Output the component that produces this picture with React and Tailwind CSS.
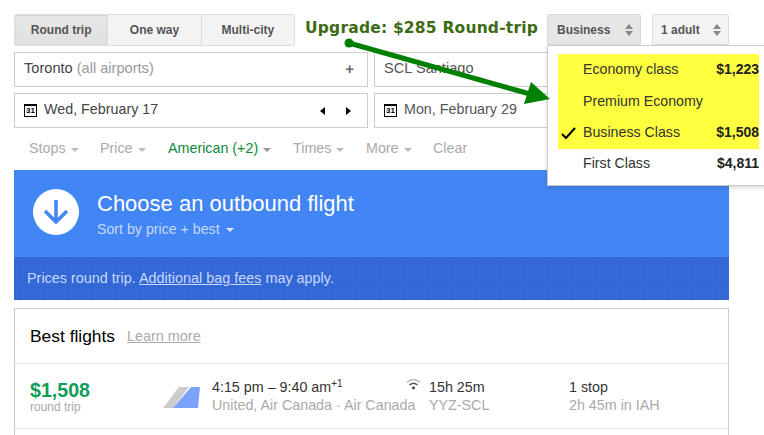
import React from "react";

const Caret = ({ c = "border-t-[#bbb]" }) => (
  <span className={`inline-block w-0 h-0 border-x-[4px] border-x-transparent border-t-[4px] ${c} ml-[5px] align-middle`} />
);

const Updown = () => (
  <span className="flex flex-col gap-[2px]">
    <span className="w-0 h-0 border-x-[4px] border-x-transparent border-b-[5px] border-b-[#888]" />
    <span className="w-0 h-0 border-x-[4px] border-x-transparent border-t-[5px] border-t-[#888]" />
  </span>
);

const Cal = () => (
  <span className="w-[13px] h-[13px] mt-[2px] border border-black border-t-2 flex items-center justify-center text-[8px] font-bold leading-none text-black shrink-0">31</span>
);

const Tab = ({ children, active }) => (
  <div className={`flex-1 flex items-center justify-center text-xs font-bold text-[#555] border-r border-[#ddd] last:border-r-0 ${active ? "bg-gradient-to-b from-[#e8e8e8] to-[#e0e0e0] shadow-[inset_0_1px_2px_rgba(0,0,0,0.1)]" : "bg-[#f3f3f3]"}`}>
    {children}
  </div>
);

const Menu = ({ label, price, check, last }) => (
  <div className={`relative h-[31.6px] flex items-center justify-between pl-[25px] text-[14.2px] text-[#333] ${last ? "pb-[2px]" : ""}`}>
    {check && (
      <svg className="absolute left-[3px] top-[10px]" width="15" height="12" viewBox="0 0 15 12">
        <path d="M1 7 L5 11 L14 1" fill="none" stroke="#000" strokeWidth="2" />
      </svg>
    )}
    <span>{label}</span>
    {price && <span className="font-bold text-[14px] text-[#222]">{price}</span>}
  </div>
);

export default function App() {
  return (
    <div className="relative w-[764px] h-[435px] overflow-hidden bg-white font-['Liberation_Sans',Arial,sans-serif]">
      <div className="w-[715px] ml-[14px] pt-[14px]">
        <div className="flex h-[32px]">
          <div className="w-[281px] flex border border-[#ddd] rounded-[2px] overflow-hidden">
            <Tab active>Round trip</Tab>
            <Tab>One way</Tab>
            <Tab>Multi-city</Tab>
          </div>
          <div className="ml-[10px] w-[242px] text-[#3d6b14] font-bold text-[15.5px] leading-[29px] tracking-[0.2px] font-['DejaVu_Sans',sans-serif] whitespace-nowrap">
            Upgrade: $285 Round-trip
          </div>
          <div className="w-[94px] h-[31px] bg-[#e6e6e6] border border-[#d8d8d8] rounded-[2px] flex items-center justify-between pl-[9px] pr-[7px] text-xs font-bold text-[#555]">
            Business <Updown />
          </div>
          <div className="ml-[11px] w-[77px] h-[31px] bg-[#f3f3f3] border border-[#ddd] rounded-[2px] flex items-center justify-between pl-[8px] pr-[7px] text-xs font-bold text-[#555]">
            1 adult <Updown />
          </div>
        </div>

        <div className="flex gap-[6px] mt-[6px]">
          <div className="w-[354px] h-[35px] border border-[#ccc] flex items-center justify-between pl-[9px] pr-[13px] pb-[2px] text-[14.6px] text-[#444]">
            <span>Toronto <span className="text-[#999]">(all airports)</span></span>
            <span className="text-[#666] font-bold text-[15px] leading-none">+</span>
          </div>
          <div className="flex-1 h-[35px] border border-[#ccc] flex items-center pl-[9px] pb-[2px] text-[14.6px] text-[#555]">
            SCL Santiago
          </div>
        </div>

        <div className="flex gap-[6px] mt-[6px]">
          <div className="w-[354px] h-[35px] border border-[#ccc] flex items-center pl-[9px] pr-[16px] pb-[2px] text-[14.3px] text-[#444]">
            <Cal />
            <span className="ml-[7px] flex-1">Wed, February 17</span>
            <span className="mt-[2px] w-0 h-0 border-y-[4px] border-y-transparent border-r-[5px] border-r-black" />
            <span className="mt-[2px] ml-[21px] w-0 h-0 border-y-[4px] border-y-transparent border-l-[5px] border-l-black" />
          </div>
          <div className="flex-1 h-[35px] border border-[#ccc] flex items-center pl-[9px] pb-[2px] text-[14.3px] text-[#555]">
            <Cal />
            <span className="ml-[7px]">Mon, February 29</span>
          </div>
        </div>

        <div className="flex h-[42px] items-center pl-[15px] text-[14.3px] text-[#aaa] whitespace-nowrap">
          <span className="w-[71px]">Stops<Caret /></span>
          <span className="w-[68px]">Price<Caret /></span>
          <span className="w-[125px]"><span className="text-[#0f8a3c]">American (+2)</span><Caret c="border-t-[#999]" /></span>
          <span className="w-[73px]">Times<Caret /></span>
          <span className="w-[67px]">More<Caret /></span>
          <span>Clear</span>
        </div>

        <div className="h-[130px] bg-[#4285f4] flex flex-col">
          <div className="h-[87px] flex items-start pl-[19px] pt-[19px]">
            <div className="w-[46px] h-[46px] rounded-full bg-white flex items-center justify-center shrink-0">
              <svg width="30" height="30" viewBox="0 0 30 30">
                <path d="M15 3 V25 M4 14 L15 25 L26 14" fill="none" stroke="#4285f4" strokeWidth="3.5" />
              </svg>
            </div>
            <div className="ml-[18px]">
              <div className="text-[22px] leading-[30px] text-white">Choose an outbound flight</div>
              <div className="text-[14.2px] leading-[20px] text-[#c6d9fb]">
                Sort by price + best
                <span className="inline-block w-0 h-0 border-x-[4px] border-x-transparent border-t-[4px] border-t-[#dce8fd] ml-[6px] align-middle" />
              </div>
            </div>
          </div>
          <div className="flex-1 bg-[#3367d6] bg-[radial-gradient(rgba(255,255,255,0.04)_1px,transparent_1px)] bg-[length:6px_6px] flex items-center pl-[13px] text-[14.4px] text-[#c6d9fb]">
            <span>Prices round trip. <span className="underline">Additional bag fees</span> may apply.</span>
          </div>
        </div>

        <div className="mt-[8px] border-x border-t border-[#ccc] h-[200px]">
          <div className="h-[55px] flex items-center pl-[15px] border-b border-[#e5e5e5]">
            <span className="text-[17.4px] text-black">Best flights</span>
            <span className="ml-[12px] mt-[2px] text-[14.4px] text-[#aaa] underline">Learn more</span>
          </div>
          <div className="h-[65px] flex border-b border-[#e5e5e5] whitespace-nowrap">
            <div className="w-[133px] pl-[15px] pt-[15px]">
              <div className="text-[19.6px] leading-[22px] font-bold text-[#0f9d58]">$1,508</div>
              <div className="text-[12px] leading-[12px] text-[#aaa]">round trip</div>
            </div>
            <svg className="mt-[21px]" width="64" height="24" viewBox="0 0 64 24">
              <path d="M15 23 L31 2 L41 2 L25 23 Z" fill="#ccc" />
              <path d="M25 23 L43 2 L52 2 L50 23 Z" fill="#7ba4f8" />
            </svg>
            <div className="w-[217px] pt-[14px] text-[14.3px] leading-[18px]">
              <div className="text-[#333]">4:15 pm – 9:40 am<sup className="text-[10px] leading-none">+1</sup></div>
              <div className="text-[#aaa]">United, Air Canada · Air Canada</div>
            </div>
            <div className="relative w-[140px] pt-[14px] text-[14.3px] leading-[18px]">
              <svg className="absolute -left-[23px] top-[14px]" width="15" height="12" viewBox="0 0 15 12">
                <path d="M1 4.5 Q7.5 -1.5 14 4.5" fill="none" stroke="#bbb" strokeWidth="1.6" />
                <path d="M3.5 7 Q7.5 3.5 11.5 7" fill="none" stroke="#555" strokeWidth="1.6" />
                <circle cx="7.5" cy="10" r="1.4" fill="#333" />
              </svg>
              <div className="text-[#333]">15h 25m</div>
              <div className="text-[#aaa]">YYZ-SCL</div>
            </div>
            <div className="pt-[14px] text-[14.3px] leading-[18px]">
              <div className="text-[#333]">1 stop</div>
              <div className="text-[#aaa]">2h 45m in IAH</div>
            </div>
          </div>
        </div>
      </div>

      <div className="absolute left-[547px] top-[45px] w-[230px] h-[141px] bg-white border border-[#ccc] shadow-[0_2px_4px_rgba(0,0,0,0.15)] pt-[8px] pl-[10px]">
        <div className="w-[201px] bg-[#ffff40]">
          <Menu label="Economy class" price="$1,223" />
          <Menu label="Premium Economy" />
          <Menu label="Business Class" price="$1,508" check />
        </div>
        <div className="w-[201px]">
          <Menu label="First Class" price="$4,811" last />
        </div>
      </div>

      <svg className="absolute left-0 top-0 pointer-events-none" width="764" height="435" viewBox="0 0 764 435">
        <circle cx="349" cy="43" r="4.5" fill="#008000" />
        <path d="M349 43 L530 94" stroke="#008000" strokeWidth="5" />
        <path d="M550 99 L531 82 L524 104 Z" fill="#008000" />
      </svg>
    </div>
  );
}
